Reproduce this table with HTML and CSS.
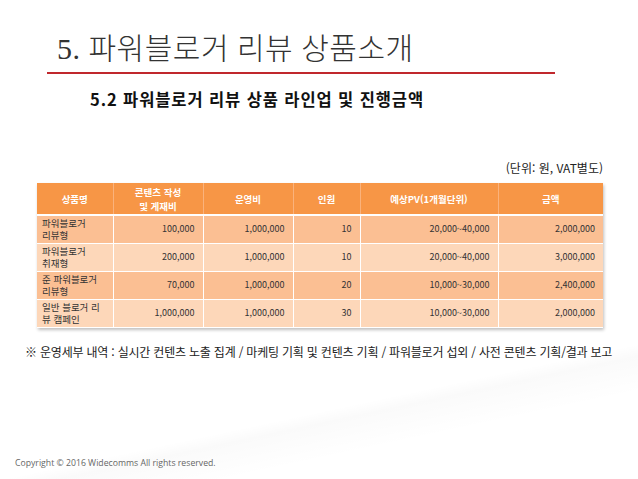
FILE: index.html
```html
<!DOCTYPE html>
<html lang="ko">
<head>
<meta charset="utf-8">
<link rel="stylesheet" href="styles.css">
</head>
<body>
<div class="slide">
  <header class="head">
    <h1 class="title">5. 파워블로거 리뷰 상품소개</h1>
    <div class="rule"></div>
  </header>
  <h2 class="subtitle">5.2 파워블로거 리뷰 상품 라인업 및 진행금액</h2>
  <div class="unit">(단위: 원, VAT별도)</div>
  <table class="grid">
    <colgroup>
      <col class="c1"><col class="c2"><col class="c3"><col class="c4"><col class="c5"><col class="c6">
    </colgroup>
    <thead>
      <tr><th>상품명</th><th>콘텐츠 작성<br>및 게재비</th><th>운영비</th><th>인원</th><th>예상PV(1개월단위)</th><th>금액</th></tr>
    </thead>
    <tbody>
      <tr class="odd"><td class="name">파워블로거<br>리뷰형</td><td>100,000</td><td>1,000,000</td><td>10</td><td>20,000~40,000</td><td>2,000,000</td></tr>
      <tr class="even"><td class="name">파워블로거<br>취재형</td><td>200,000</td><td>1,000,000</td><td>10</td><td>20,000~40,000</td><td>3,000,000</td></tr>
      <tr class="odd"><td class="name">준 파워블로거<br>리뷰형</td><td>70,000</td><td>1,000,000</td><td>20</td><td>10,000~30,000</td><td>2,400,000</td></tr>
      <tr class="even"><td class="name">일반 블로거 리<br>뷰 캠페인</td><td>1,000,000</td><td>1,000,000</td><td>30</td><td>10,000~30,000</td><td>2,000,000</td></tr>
    </tbody>
  </table>
  <p class="note">※ 운영세부 내역 : 실시간 컨텐츠 노출 집계 / 마케팅 기획 및 컨텐츠 기획 / 파워블로거 섭외 / 사전 콘텐츠 기획/결과 보고</p>
  <footer class="copy">Copyright © 2016 Widecomms All rights reserved.</footer>
</div>
</body>
</html>
```
FILE: styles.css
```css
* { box-sizing: border-box; }
html, body { margin: 0; padding: 0; background: #fff; }
.slide {
  width: 638px;
  height: 479px;
  overflow: hidden;
  display: flex;
  flex-direction: column;
  font-family: "Noto Sans CJK KR", "Noto Sans", sans-serif;
  color: #111;
  background:
    linear-gradient(168deg, transparent 0 78%, rgba(0,0,0,0.02) 80%, transparent 86%),
    #fff;
}
.head {
  padding: 32px 0 0 47px;
}
.title {
  margin: 0 0 0 10px;
  font-family: "Liberation Serif", "Noto Sans CJK KR", serif;
  font-weight: 300;
  font-size: 30px;
  line-height: 34px;
  color: #333;
  letter-spacing: 0.5px;
}
.rule {
  margin-top: 6px;
  width: 508px;
  height: 2px;
  background: #c0282d;
}
.subtitle {
  margin: 14px 0 0 90px;
  font-size: 16.5px;
  line-height: 22px;
  font-weight: 700;
  color: #111;
  letter-spacing: 0.9px;
}
.unit {
  align-self: flex-end;
  margin: 50px 35px 0 0;
  font-size: 12px;
  line-height: 16px;
  color: #222;
}
.grid {
  margin: 7px 0 0 37px;
  width: 566px;
  border-collapse: collapse;
  table-layout: fixed;
  font-size: 9px;
  box-shadow: 1px 2px 3px rgba(0,0,0,0.25);
}
.c1 { width: 76px; }
.c2 { width: 90px; }
.c3 { width: 90px; }
.c4 { width: 67px; }
.c5 { width: 138px; }
.c6 { width: 105px; }
.grid th {
  background: #f79646;
  color: #fff;
  font-weight: 700;
  font-size: 9.5px;
  line-height: 14px;
  height: 32px;
  padding: 0 4px;
  text-align: center;
  border-bottom: 2px solid #fff;
  border-right: 1px solid #fab27c;
}
.grid th:last-child { border-right: 0; }
.grid td {
  height: 28px;
  padding: 0 8px;
  text-align: right;
  color: #333;
  line-height: 12px;
  border: 1px solid #fff;
  border-top: 0;
}
.grid td:first-child { border-left: 0; }
.grid td:last-child { border-right: 0; }
.grid td.name {
  text-align: left;
  padding: 0 5px;
  font-size: 9.5px;
  line-height: 12.5px;
}
.grid tr.odd td { background: #fbbf93; }
.grid tr.even td { background: #fdd7b9; }
.note {
  margin: 16px 0 0 25px;
  font-size: 12px;
  line-height: 16px;
  color: #222;
  letter-spacing: -0.2px;
}
.copy {
  margin: auto 0 10px 15px;
  font-family: "Open Sans", "Noto Sans", sans-serif;
  font-size: 8.7px;
  line-height: 12px;
  color: #666;
}
```
